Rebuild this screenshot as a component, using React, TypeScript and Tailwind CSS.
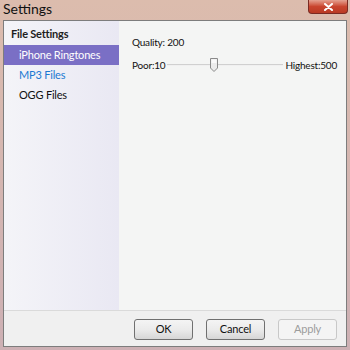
import React from 'react';

const FONT = { fontFamily: 'Lato, "Liberation Sans", sans-serif' };

function TitleBar() {
  return (
    <div className="h-[20px] flex items-start justify-between relative">
      <span className="text-[14px] text-[#111] pl-[3px] pt-[1px] leading-[16px]">Settings</span>
      <div className="absolute right-[2px] top-0 w-[40px] h-[14px] rounded-b-[4px] border border-t-0 border-[#7a2a22] bg-gradient-to-b from-[#e4a191] via-[#c9452f] to-[#b93a24] flex items-center justify-center">
        <svg width="9" height="8" viewBox="0 0 9 8">
          <path d="M1 1 L8 7 M8 1 L1 7" stroke="#fff" strokeWidth="2" strokeLinecap="round" />
        </svg>
      </div>
    </div>
  );
}

function Sidebar() {
  return (
    <div className="w-[115px] shrink-0 bg-gradient-to-r from-[#f4f4f8] to-[#e9e8f3] flex flex-col whitespace-nowrap text-[11px] tracking-[-0.2px]">
      <div className="font-bold text-[#1e1e1e] pl-[7px] pt-[4px] h-[24px] leading-[18px]">File Settings</div>
      <div className="h-[20px] bg-[#7a6fc5] text-white pl-[15px] leading-[20px]">iPhone Ringtones</div>
      <div className="h-[20px] text-[#1b79d2] pl-[15px] leading-[20px]">MP3 Files</div>
      <div className="h-[20px] text-[#111] pl-[15px] leading-[20px]">OGG Files</div>
    </div>
  );
}

function Slider() {
  return (
    <div className="flex items-center mt-[8px] whitespace-nowrap">
      <span>Poor:10</span>
      <div className="relative w-[116px] shrink-0 h-[16px] mx-[2px] flex items-center">
        <div className="w-full h-[2px] bg-[#d0d0d0] border-b border-[#f0f0f0]" />
        <svg className="absolute left-[42px] top-0" width="10" height="16" viewBox="0 0 10 16">
          <path d="M1.5 1.5 H8.5 V11 L5 14.5 L1.5 11 Z" fill="#ececec" stroke="#8a8a8a" />
          <path d="M2.5 2.5 H7.5 V6 H2.5 Z" fill="#fafafa" />
        </svg>
      </div>
      <span>Highest:500</span>
    </div>
  );
}

function Btn({ label, disabled }: { label: string; disabled?: boolean }) {
  return (
    <div
      className={
        'w-[59px] h-[21px] rounded-[3px] border flex items-center justify-center text-[11px] tracking-[-0.2px] ' +
        (disabled
          ? 'border-[#c8c8c8] bg-[#f4f4f4] text-[#9c9c9c]'
          : 'border-[#707070] bg-gradient-to-b from-[#f4f4f4] via-[#ebebeb] to-[#d6d6d6] text-[#111]')
      }
    >
      {label}
    </div>
  );
}

export default function App() {
  return (
    <div className="w-[350px] h-[350px] flex flex-col bg-gradient-to-b from-[#dcbcad] to-[#cdb0b4]" style={FONT}>
      <TitleBar />
      <div className="flex-1 mx-[3px] mb-[3px] border border-[#7d7d7d] bg-[#f0f0f0] flex flex-col">
        <div className="flex-1 flex border-b border-[#dadada]">
          <Sidebar />
          <div className="flex-1 min-w-0 bg-[#f4f5f4] pl-[13px] pt-[14px] text-[10px] tracking-[-0.2px] text-[#111]">
            <div className="leading-[14px]">Quality: 200</div>
            <Slider />
          </div>
        </div>
        <div className="h-[35px] flex items-center justify-end gap-[13px] pr-[9px] pt-[2px]">
          <Btn label="OK" />
          <Btn label="Cancel" />
          <Btn label="Apply" disabled />
        </div>
      </div>
    </div>
  );
}
